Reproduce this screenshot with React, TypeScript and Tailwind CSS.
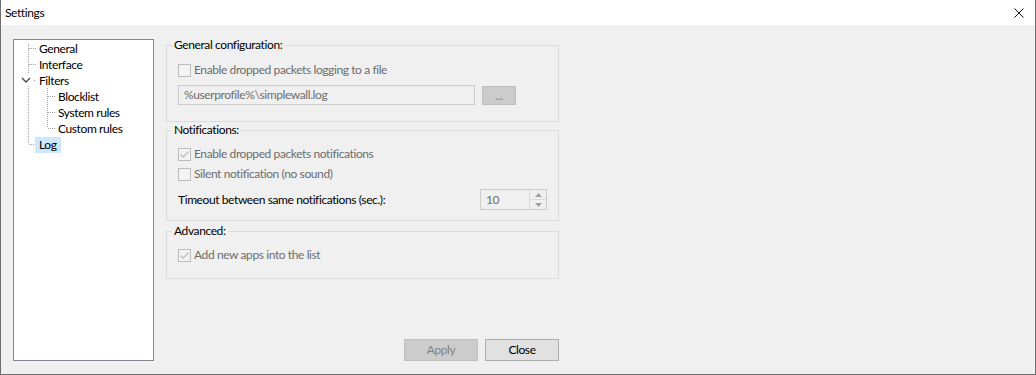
import React from "react";

const font = { fontFamily: 'Lato, "Noto Sans", sans-serif' };

function Check({ checked, label }: { checked?: boolean; label: string }) {
  return (
    <div className="flex h-[20px] items-center">
      <div className="flex h-[13px] w-[13px] items-center justify-center border border-[#bcbcbc] bg-[#f3f3f3]">
        {checked && (
          <svg width="11" height="11" viewBox="0 0 11 11">
            <path d="M1.5 5.5 L4.2 8.2 L9.5 2.5" fill="none" stroke="#bcbcbc" strokeWidth="1.2" />
          </svg>
        )}
      </div>
      <span className="ml-[3px] text-[12px] text-[#6d6d6d]">{label}</span>
    </div>
  );
}

function Group({ title, children, className }: { title: string; children: React.ReactNode; className?: string }) {
  return (
    <div className={"relative border border-[#dcdcdc] px-[11px] " + (className ?? "")}>
      <span className="absolute left-[5px] top-[-9px] bg-[#f0f0f0] px-[2px] text-[12px] leading-[16px] text-black">
        {title}
      </span>
      {children}
    </div>
  );
}

export default function App() {
  const rootRows = ["General", "Interface", "Filters"];
  return (
    <div className="flex h-[375px] w-[1036px] flex-col bg-[#f0f0f0] text-[12px] tracking-[-0.4px]" style={font}>
      <div className="flex h-[25px] items-center justify-between border-l border-r border-[#6e6e6e] bg-white pl-[4px] pr-[11px]">
        <span className="text-[12px] text-black">Settings</span>
        <svg width="10" height="10" viewBox="0 0 10 10">
          <path d="M0.5 0.5 L9.5 9.5 M9.5 0.5 L0.5 9.5" stroke="#111" strokeWidth="1" />
        </svg>
      </div>
      <div className="flex flex-1 border-b border-l border-r border-[#6e6e6e] pb-[13px] pl-[12px]">
        <div className="relative mt-[14px] h-[322px] w-[141px] border border-[#828790] bg-white">
          <svg className="absolute left-0 top-0" width="139" height="120" viewBox="0 0 139 120">
            <g stroke="#a0a0a0" strokeWidth="1" strokeDasharray="1 1" fill="none">
              <path d="M14.5 4 V104" />
              <path d="M15 8.5 H23" />
              <path d="M15 24.5 H23" />
              <path d="M15 104.5 H22" />
              <path d="M33.5 48 V88" />
              <path d="M34 56.5 H42" />
              <path d="M34 72.5 H42" />
              <path d="M34 88.5 H42" />
            </g>
            <rect x="7" y="34" width="12" height="12" fill="white" />
            <path d="M8 38 L12 42 L16 38" fill="none" stroke="#444" strokeWidth="1.3" />
            <rect x="20" y="40" width="1" height="1" fill="#a0a0a0" />
          </svg>
          <div className="relative flex flex-col pt-[1px] text-[12px] leading-[16px] text-black">
            {rootRows.map((r) => (
              <div key={r} className="h-[16px] pl-[25px]">
                {r}
              </div>
            ))}
            {["Blocklist", "System rules", "Custom rules"].map((r) => (
              <div key={r} className="h-[16px] pl-[44px]">
                {r}
              </div>
            ))}
            <div className="h-[16px] pl-[21px]">
              <span className="inline-block h-[16px] bg-[#cce8ff] px-[4px]">Log</span>
            </div>
          </div>
        </div>

        <div className="ml-[12px] flex w-[393px] flex-col pt-[20px]">
          <Group title="General configuration:" className="pb-[16px] pt-[14px]">
            <Check label="Enable dropped packets logging to a file" />
            <div className="mt-[5px] flex items-start">
              <div className="flex h-[20px] w-[297px] items-center border border-[#cccccc] bg-[#f0f0f0] pl-[5px] text-[12px] text-[#6d6d6d]">
                %userprofile%\simplewall.log
              </div>
              <div className="ml-[7px] mt-[1px] flex h-[19px] w-[34px] items-center justify-center border border-[#bfbfbf] bg-[#cccccc] text-[12px] leading-none text-[#838383]">
                ...
              </div>
            </div>
          </Group>

          <Group title="Notifications:" className="mt-[8px] pb-[10px] pt-[13px]">
            <Check checked label="Enable dropped packets notifications" />
            <Check label="Silent notification (no sound)" />
            <div className="mt-[5px] flex h-[21px] items-center justify-between">
              <span className="text-[12px] text-black">Timeout between same notifications (sec.):</span>
              <div className="flex h-[21px] w-[67px] border border-[#cccccc] bg-[#f0f0f0]">
                <div className="flex flex-1 items-center pl-[5px] text-[12px] text-[#6d6d6d]">10</div>
                <div className="flex w-[17px] flex-col border-l border-[#dadada]">
                  <div className="flex flex-1 items-center justify-center border-b border-[#dadada]">
                    <svg width="7" height="4" viewBox="0 0 7 4">
                      <path d="M0 4 L3.5 0 L7 4 Z" fill="#a0a0a0" />
                    </svg>
                  </div>
                  <div className="flex flex-1 items-center justify-center">
                    <svg width="7" height="4" viewBox="0 0 7 4">
                      <path d="M0 0 L3.5 4 L7 0 Z" fill="#a0a0a0" />
                    </svg>
                  </div>
                </div>
              </div>
            </div>
          </Group>

          <Group title="Advanced:" className="mt-[10px] pb-[13px] pt-[13px]">
            <Check checked label="Add new apps into the list" />
          </Group>

          <div className="mt-auto flex justify-end gap-[7px]">
            <div className="flex h-[22px] w-[74px] items-center justify-center border border-[#bfbfbf] bg-[#cccccc] text-[12px] text-[#838383]">
              Apply
            </div>
            <div className="flex h-[22px] w-[74px] items-center justify-center border border-[#adadad] bg-[#e1e1e1] text-[12px] text-black">
              Close
            </div>
          </div>
        </div>
      </div>
    </div>
  );
}
